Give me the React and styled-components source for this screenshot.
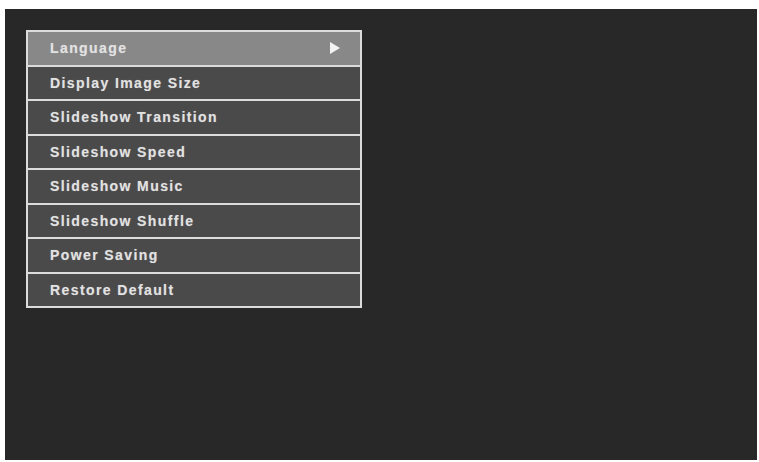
import React from 'react';
import styled, {createGlobalStyle} from 'styled-components';

const GlobalStyle = createGlobalStyle`
	html, body {
		margin: 0;
		padding: 0;
		background: #ffffff;
	}
`;

const Page = styled.div`
	width: 759px;
	height: 462px;
	padding: 9px 2px 2px 5px;
	box-sizing: border-box;
`;

const Screen = styled.div`
	width: 752px;
	height: 451px;
	background: #282828;
	padding: 21px 0 0 21px;
	box-sizing: border-box;
`;

const Menu = styled.ul`
	list-style: none;
	margin: 0;
	padding: 0;
	width: 336px;
	border: 2px solid #dcdcdc;
	background: #dcdcdc;
	box-sizing: border-box;
	display: flex;
	flex-direction: column;
	gap: 2px;
`;

const Item = styled.li`
	height: 32.5px;
	display: flex;
	align-items: center;
	justify-content: space-between;
	padding: 0 20px 0 22px;
	background: ${props => (props.selected ? '#888888' : '#4a4a4a')};
	color: #e2e2e2;
	font-family: "Liberation Sans", Arial, sans-serif;
	font-weight: bold;
	font-size: 14px;
	letter-spacing: 1.4px;
	text-shadow: 0 0 1px rgba(255, 255, 255, 0.35);
`;

const Arrow = styled.span`
	width: 0;
	height: 0;
	border-top: 6px solid transparent;
	border-bottom: 6px solid transparent;
	border-left: 10px solid #f2f2f2;
`;

const items = [
	'Language',
	'Display Image Size',
	'Slideshow Transition',
	'Slideshow Speed',
	'Slideshow Music',
	'Slideshow Shuffle',
	'Power Saving',
	'Restore Default',
];

export default function App () {
	return (
		<Page>
			<GlobalStyle />
			<Screen>
				<Menu>
					{items.map ((label, i) => (
						<Item key={label} selected={i === 0}>
							<span>{label}</span>
							{i === 0 && <Arrow />}
						</Item>
					))}
				</Menu>
			</Screen>
		</Page>
	);
}
